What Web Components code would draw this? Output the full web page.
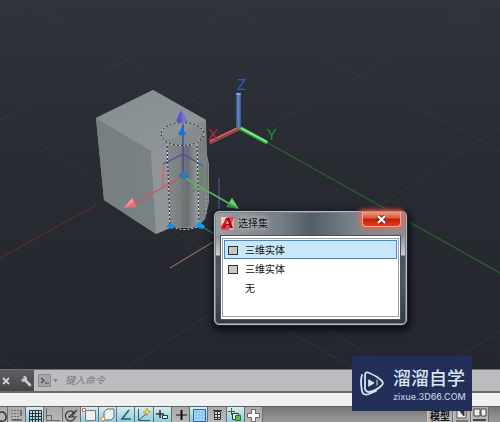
<!DOCTYPE html>
<html lang="zh-CN">
<head>
<meta charset="utf-8">
<title>选择集</title>
<style>
html,body{margin:0;height:100%;overflow:hidden}
body{font-family:"Liberation Sans","Noto Sans CJK SC",sans-serif;font-size:10px}
</style>
</head>
<body>
<cad-app></cad-app>

<template id="t-app">
<style>
:host{display:flex;flex-direction:column;height:100%;position:relative;background:#f0f0f0}
main{flex:1;min-height:0;position:relative}
selection-dialog{position:absolute;left:214px;top:211px}
brand-badge{position:absolute;right:28px;bottom:11px}
</style>
<main>
<model-scene></model-scene>
<selection-dialog heading="选择集">
<pick-row selected>三维实体</pick-row>
<pick-row>三维实体</pick-row>
<pick-row plain>无</pick-row>
</selection-dialog>
</main>
<command-line></command-line>
<status-bar></status-bar>
<brand-badge></brand-badge>
</template>

<template id="t-scene">
<style>
:host{display:block;height:100%;overflow:hidden;background:linear-gradient(#303339,#282b31 45%,#24272e)}
svg{display:block;width:100%;height:100%}
text{font:400 15px Lato,"Liberation Sans",sans-serif}
</style>
<svg viewBox="0 0 500 369" preserveAspectRatio="xMinYMin slice" role="img" aria-label="三维模型">
<defs>
<linearGradient id="top" x1="0" x2="1" y1="0" y2="1"><stop stop-color="#858d90"/><stop offset="1" stop-color="#91979c"/></linearGradient>
<linearGradient id="left" x1="0" x2="1"><stop stop-color="#767e80"/><stop offset="1" stop-color="#7a8284"/></linearGradient>
<linearGradient id="cyl" x1="0" x2="1"><stop stop-color="#858b8e"/><stop offset=".3" stop-color="#7b8082"/><stop offset=".5" stop-color="#6b6e70"/><stop offset=".75" stop-color="#94999b"/><stop offset="1" stop-color="#6d7274"/></linearGradient>
<linearGradient id="zz" x1="0" x2="1"><stop stop-color="#355191"/><stop offset=".5" stop-color="#6286c9"/><stop offset="1" stop-color="#344d89"/></linearGradient>
</defs>
<g stroke="#3b3e44" fill="none" opacity=".6">
<path d="M22 0 214 112M215 0 500 151M435 0 500 33M0 18 38 0M0 120 256 0M126 368 500 128M440 368 500 331M288 331 356 369M0 118 390 369M0 359 20 369M268 127 490 0"/>
</g>
<path d="M0 258 98 204" stroke="#642e34"/>
<path d="M268 143 500 273" stroke="#276629" stroke-width="1.2"/>
<path d="M170 268 213 242" stroke="#b8727d"/>
<path d="M219 178V209" stroke="#5550a0" stroke-width="1.2"/>
<path d="M96 118 153 90 206 120 207 155 209 164 209 202 205 219 197 228 170 228 156 234 104 200Z" fill="#858c8e"/>
<path d="M96 118 153 90 206 120 194 126 151 151Z" fill="url(#top)"/>
<path d="M96 118 151 151 156 234 104 200Z" fill="url(#left)"/>
<path d="M151 151 167 143 170 228 156 234Z" fill="#8f9598"/>
<path d="M167 143Q181 149 196 143L205 128 206 155 208 164V203L205 219Q186 232 170 225Z" fill="url(#cyl)"/>
<path d="M198 142 205 129 208 204 200 222Z" fill="#7a8183"/>
<g fill="none" stroke="#202328">
<ellipse cx="182.500" cy="134" rx="21.500" ry="11.500"/><path d="M167 144 170 226Q185 233 199 226L197 144"/>
</g>
<g fill="none" stroke="#f3f5f7" stroke-dasharray="2 2">
<ellipse cx="182.500" cy="134" rx="21.500" ry="11.500"/><path d="M167 144 170 226Q185 233 199 226L197 144"/><path d="M206 196V216" stroke="#9fb0b8"/>
</g>
<path d="M163 164 183 154 203 166" fill="none" stroke="#514b9c" stroke-width="1.3"/>
<path d="M183 176V124" stroke="#4445a0" stroke-width="1.4"/>
<path d="M163 165V187L182 198" fill="none" stroke="#e25155" stroke-dasharray="21 6 8 5"/>
<path d="M182 177 135 203" stroke="#cf5559" stroke-width="1.2"/>
<path d="M201 168V186L184 197" fill="none" stroke="#3c9a3f" stroke-dasharray="18 4 8 3"/>
<path d="M183 177 230 204" stroke="#57b65b" stroke-width="1.5"/>
<path d="M201 226 214 234" stroke="#299552" stroke-width="1.2"/>
<path d="M181 110 176 121Q181 125 187 121Z" fill="#5e58c2"/><path d="M181 110 182 123 187 121Z" fill="#7671d2"/>
<path d="M182 127 178 134Q182 137 186 134Z" fill="#1176dc"/>
<path d="M183 171 178 176 184 180 190 176Z" fill="#3277b8"/>
<path d="M170 223 166 227 172 229 175 226Z" fill="#118ae9"/>
<path d="M199 222 195 227 203 229 205 226Z" fill="#119cf0"/>
<path d="M124 208 132 198 137 207Z" fill="#ee6970"/><path d="M124 208 132 198 134 202Z" fill="#fa9493"/>
<path d="M239 209 226 207 232 198Z" fill="#38983b"/><path d="M239 209 232 198 229 203Z" fill="#74cb75"/>
<path d="M238 129 211 142" stroke="#a43f45" stroke-width="4" stroke-linecap="round"/>
<path d="M237 128 210 141" stroke="#d5777b" stroke-width="1.2"/>
<path d="M240 128 266 142" stroke="#35a33a" stroke-width="4" stroke-linecap="round"/>
<path d="M241 128 267 142" stroke="#89ed8c" stroke-width="1.5"/>
<path d="M236 94Q238 91 241 94V127H236Z" fill="url(#zz)"/><path d="M236 94h5" stroke="#b7caff"/>
<text x="237" y="90" fill="#2c58ae">Z</text>
<text x="267" y="140" fill="#278832">Y</text>
<text x="208" y="140" fill="#a72d39">X</text>
</svg>
</template>

<template id="t-dialog">
<style>
:host{display:block;box-sizing:border-box;width:193px;padding:0 5px 4px;border:1px solid #b3bac0;border-radius:5px;
background:linear-gradient(90deg,#9b9fa4,#747c85 35%,#535d67 50%,#7e868d 75%,#8c8f94) 0 0/100% 24px no-repeat,linear-gradient(#8c9298 24px,#c8ced3 43px,#4b545d 44px,#4f5963 70px,#303943);
box-shadow:inset 0 0 0 1px #79828a,0 0 0 1px #202329,1px 3px 7px 2px #090b0f}
header{display:flex;align-items:center;height:23px;gap:4px;padding-left:1px}
h1{margin:0;flex:1;font-size:10px;line-height:16px;font-weight:400;color:#111;text-shadow:0 0 5px #c7cbd0,0 0 5px #c7cbd0}
.logo{width:13px;height:13px}
.close{align-self:flex-start;width:39px;height:15px;padding:0;border:1px solid #ffab94;border-top:0;border-radius:0 0 4px 4px;background:linear-gradient(#ef9b83,#d65335 45%,#c11d0b 50%,#e73b16);box-shadow:0 0 5px 2px #f46350;display:grid;place-items:center}
.frame{padding:2px 1px;border:1px solid #4c5358;background:#fff}
.list{box-sizing:border-box;min-height:79px;padding:1px;border:1px solid #9ba1a6;background:#fff;display:flex;flex-direction:column}
</style>
<header>
<svg class="logo" viewBox="0 0 13 13"><path fill="#e7444a" d="M0 0h13v13H0z"/><path fill="#f9c4c0" d="M0 0h7L0 9z"/><path fill="#f4a09b" d="M13 0v13H8z"/><path fill="#8b0811" d="M5 1 1 11h3l1-3h3l1 3h3L8 1z"/><path fill="#d31d23" d="M6 1 1 11l6-6z"/><path fill="#f2a19c" d="m6 4-1 3h3L7 4z"/></svg>
<h1></h1>
<button class="close" aria-label="关闭"><svg width="9" height="9" viewBox="0 0 9 9"><path d="m1 1 7 7m0-7L1 8" stroke="#6f2a24" stroke-width="4"/><path d="m1 1 7 7m0-7L1 8" stroke="#fff" stroke-width="2.200"/></svg></button>
</header>
<div class="frame"><div class="list"><slot></slot></div></div>
</template>

<template id="t-row">
<style>
:host{display:block}
button{display:flex;align-items:center;gap:7px;box-sizing:border-box;width:100%;height:19px;padding:2px 3px 0;border:1px solid transparent;background:none;font:inherit;font-size:10px;line-height:16px;color:#111;text-align:left}
:host([selected]) button{border-color:#3b8bd8;background:#c8e7f8}
i{box-sizing:border-box;width:10px;height:9px;border:1px solid #263641;background:#c9c6c2}
:host([plain]) i{visibility:hidden}
</style>
<button><i></i><span><slot></slot></span></button>
</template>

<template id="t-command">
<style>
:host{display:flex;background:#bcbdbf;border-top:1px solid #6d6f72;border-bottom:2px solid #66686b;box-sizing:border-box;height:24px}
button{padding:0;border:0;background:none;display:grid;place-items:center}
.tools{display:flex;align-items:center;gap:9px;width:34px;box-sizing:border-box;background:linear-gradient(#5d5e60,#454648)}
.tools button{width:11px}
label{display:flex;align-items:center;flex:1;gap:4px;padding-left:4px}
input{flex:0 1 50%;min-width:0;padding:0 0 2px 3px;border:0;background:none;outline:0;font:italic 10px/16px "Noto Sans CJK SC",sans-serif;color:#444}
input::placeholder{color:#77797b;opacity:1}
</style>
<div class="tools">
<button aria-label="关闭"><svg width="11" height="10" viewBox="0 0 11 10"><path d="m3 2 6 6m0-6L3 8" stroke="#d3d4d5" stroke-width="1.800"/></svg></button>
<button aria-label="自定义"><svg width="12" height="12" viewBox="0 0 12 12"><path d="m4 4 6 6" stroke="#cbccce" stroke-width="2.600" stroke-linecap="round"/><path d="M3 1a3 3 0 1 1-2 3l2 1 2-2z" fill="#cbccce"/></svg></button>
</div>
<label>
<svg width="20" height="13" viewBox="0 0 20 13" aria-hidden="true"><path d="M.5.5h12v12H.5z" fill="#a4a6a9" stroke="#888b8e"/><path d="m3 4 3 2.500L3 9m4 0h4" fill="none" stroke="#4b4e54" stroke-width="1.200"/><path d="M15 5h5l-2.500 3z" fill="#7e8082"/></svg>
<input type="text" placeholder="键入命令" aria-label="键入命令">
</label>
</template>

<template id="t-status">
<style>
:host{display:flex;align-items:stretch;box-sizing:border-box;height:29px;padding-top:13px;background:#f0f0f0}
.bar{flex:1;display:flex;justify-content:space-between;border-top:1px solid #606264;background:linear-gradient(#777,#999);overflow:hidden}
.modes{display:grid;grid-template-columns:8px repeat(14,1fr);width:263px}
.views{display:flex;padding-right:11px}
button{box-sizing:border-box;min-width:0;padding:0;border:0;border-right:1px solid #6b6e70;background:linear-gradient(#aaa,#b9b9b9);display:flex;justify-content:center;overflow:hidden;font:700 10px/17px "Noto Sans CJK SC",sans-serif;color:#111}
button[aria-pressed=true]{background:linear-gradient(#d3edf3,#8ccbda)}
.views button{width:18px;border-left:1px solid #c3c3c3}
.views .model{width:26px}
svg{display:block;flex:none;fill:none;stroke:#333}
</style>
<div class="bar"><div class="modes"></div>
<div class="views"><button class="model">模型</button><button aria-label="快速查看布局"><svg width="14" height="16"><path d="M2 2h9v9H2z" fill="#eee" stroke="#555"/><path d="m4 3 5 6V3" fill="#333"/><path d="M1 14h12"/></svg></button><button aria-label="快速查看图形"><svg width="16" height="16"><path d="M2 2h6v7H2zM9 2h5v7H9z" fill="#eee" stroke="#444"/><path d="M1 13h13" stroke="#444" stroke-width="2"/></svg></button></div></div>
</template>

<template id="t-brand">
<style>
:host{display:flex;align-items:center;box-sizing:border-box;width:120px;height:55px;padding-left:8px;gap:9px;background:#222f59;color:#dce3f1}
.copy{display:flex;flex-direction:column;padding-bottom:2px}
b{font:500 18px/27px "Noto Sans CJK SC",sans-serif}
a{font:500 9px/11px Inter,sans-serif;color:#bdc8df;text-decoration:none}
</style>
<svg width="24" height="25" viewBox="0 0 24 25" fill="none" stroke="#d9e1ef" stroke-linecap="round" stroke-linejoin="round"><path d="M5 4Q5 1 8 1.500Q17 5 22 10Q24 13 21 15Q16 20 9 21Q6 21 5 18Z" stroke-width="1.800"/><path d="M2 4Q0 10 2 20Q3 25 9 23L16 20" stroke-width="1.800"/><path d="m9 9 5 3-5 3zM17 9v5" fill="#d9e1ef" stroke-width="1"/></svg>
<div class="copy"><b>溜溜自学</b><a href="#">zixue.3D66.COM</a></div>
</template>

<script>
const stamp = (host, id) => {
  const root = host.attachShadow({mode: 'open'});
  root.append(document.getElementById(id).content.cloneNode(true));
  return root;
};
const modes = [
  ['推断约束', 0, '<path d="M2 6q7-3 8 3t-6 5" stroke-width="1.5"/>'],
  ['捕捉', 0, '<path d="M3 3v10M6 3v10M9 3v10" stroke-dasharray="1 2"/><path d="M12 3v6M3 13h10"/>'],
  ['栅格', 1, '<path d="M2.500 3.500h12v12h-12zM5.500 3v12M8.500 3v12M11.500 3v12M2 6.500h12M2 9.500h12M2 12.500h12"/>'],
  ['正交', 0, '<path d="M1.500 1v12.500H15M1 8.500h5.500v5" stroke="#666"/>'],
  ['极轴', 0, '<path d="M12 7a5 5 0 1 0 0 4M5 10h9M6 10l8-7M10 5v5" stroke-width="1.2"/>'],
  ['对象捕捉', 1, '<path d="M4.500 3.500h10v10h-10z" fill="#eee" stroke="#777"/><path d="M1.500 1.500h3v3h-3z" fill="#fff" stroke="#e95d55"/>'],
  ['三维对象捕捉', 1, '<path d="M4 5l3-3h7v8l-3 3H4z" fill="#eee" stroke="#667"/><path d="M1.500 10.500h3v3h-3z" fill="#fff" stroke="#ee8a40"/>'],
  ['对象追踪', 1, '<path d="M11 3 4 12h9" stroke="#315b6d" stroke-width="1.6"/>'],
  ['动态坐标系', 1, '<path d="M2.500 2v11.500H14M3 13 11 6" stroke="#456"/><path d="m11 1 1 3 3 1-3 1-1 3-1-3-3-1 3-1z" fill="#ffe03b" stroke="#bd982c" stroke-width=".7"/>'],
  ['动态输入', 1, '<path d="M2 7h8M6 3v8" stroke-width="1.6"/><path d="M8.500 8.500h5v3h-5z" fill="#eee"/>'],
  ['线宽', 0, '<path d="M3 8h11" stroke="#111"/><path d="M8.500 3v10" stroke="#111" stroke-width="2"/>'],
  ['透明度', 1, '<path d="M2.500 2.500h12v12h-12z" fill="#a6d5f4" stroke="#236ca2"/><path d="M4 5h10M4 8h10M4 11h10" stroke="#69ade0" stroke-dasharray="2 1"/>'],
  ['快捷特性', 0, '<path d="M5.500 4.500h6v8h-6z" fill="#ddd"/><path d="M4 3.500h9M6 7.500h5M6 10.500h5M8.500 5v7"/>'],
  ['选择循环', 1, '<path d="M1 4.500h7M4.500 1v7" stroke="#2b6d38"/><path d="M5.500 6.500h6v6h-6z" fill="#eee"/><path d="M8.500 8.500h5v5h-5z" fill="#68b944" stroke="#346c2b"/>'],
  ['注释监视器', 0, '<path d="M6.500 2.500h4v4h4v4h-4v4h-4v-4h-4v-4h4z" fill="#fff" stroke="#666"/>']
];
customElements.define('model-scene', class extends HTMLElement {
  constructor() { super(); stamp(this, 't-scene'); }
});
customElements.define('pick-row', class extends HTMLElement {
  constructor() { super(); stamp(this, 't-row'); }
});
customElements.define('selection-dialog', class extends HTMLElement {
  constructor() { super(); stamp(this, 't-dialog'); }
  connectedCallback() { this.shadowRoot.querySelector('h1').textContent = this.getAttribute('heading'); }
});
customElements.define('command-line', class extends HTMLElement {
  constructor() { super(); stamp(this, 't-command'); }
});
customElements.define('status-bar', class extends HTMLElement {
  constructor() {
    super();
    stamp(this, 't-status').querySelector('.modes').innerHTML = modes.map(([name, on, art]) =>
      `<button aria-label="${name}" aria-pressed="${!!on}"><svg width="16" height="16" viewBox="0 0 16 16">${art}</svg></button>`).join('');
  }
});
customElements.define('brand-badge', class extends HTMLElement {
  constructor() { super(); stamp(this, 't-brand'); }
});
customElements.define('cad-app', class extends HTMLElement {
  constructor() { super(); stamp(this, 't-app'); }
});
</script>
</body>
</html>
